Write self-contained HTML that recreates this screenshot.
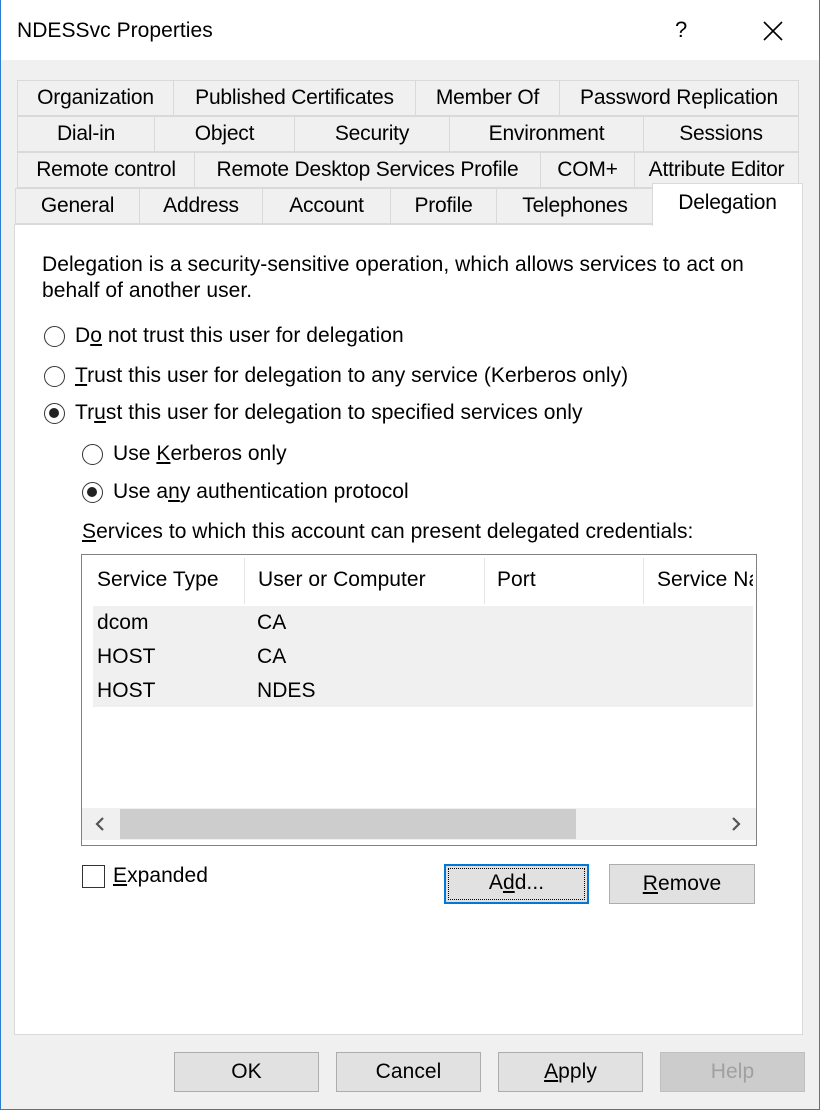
<!DOCTYPE html>
<html><head><style>
*{box-sizing:border-box;margin:0;padding:0}
body{width:820px;height:1110px;background:#f0f0f0;font-family:"Liberation Sans",sans-serif;font-size:21px;letter-spacing:0.05px;color:#000;position:relative;overflow:hidden}
.win{position:absolute;left:0;top:0;width:820px;height:1110px;border:1px solid #2b7fd0;border-top:none}
.title{position:absolute;left:1px;top:0;width:818px;height:60px;background:#fff}
.a{position:absolute;white-space:nowrap}
.tab{position:absolute;height:36px;border:1px solid #d9d9d9;background:#f0f0f0;text-align:center;line-height:34px;white-space:nowrap;letter-spacing:-0.2px}
.panel{position:absolute;left:14px;top:224px;width:789px;height:811px;background:#fff;border:1px solid #d9d9d9}
.rad{position:absolute;width:21px;height:21px;border:1.5px solid #333;border-radius:50%;background:#fff}
.rad.on::after{content:"";position:absolute;left:4px;top:4px;width:10px;height:10px;border-radius:50%;background:#222}
.btn{position:absolute;height:40px;background:#e1e1e1;border:1px solid #adadad;text-align:center;line-height:38px}
u{text-decoration:underline}
</style></head><body>
<div class="win"></div>
<div class="title"></div>
<div class="a" style="left:17px;top:19px;font-size:21px">NDESSvc Properties</div>
<div class="a" style="left:675px;top:17px;font-size:22px">?</div>
<svg class="a" style="left:762px;top:20px" width="22" height="22"><path d="M2 2L20 20M20 2L2 20" stroke="#000" stroke-width="1.6"/></svg>

<div class="tab" style="left:17px;top:80px;width:157px">Organization</div>
<div class="tab" style="left:173px;top:80px;width:243px">Published Certificates</div>
<div class="tab" style="left:415px;top:80px;width:145px">Member Of</div>
<div class="tab" style="left:559px;top:80px;width:240px">Password Replication</div>

<div class="tab" style="left:17px;top:116px;width:138px">Dial-in</div>
<div class="tab" style="left:154px;top:116px;width:141px">Object</div>
<div class="tab" style="left:294px;top:116px;width:156px">Security</div>
<div class="tab" style="left:449px;top:116px;width:195px">Environment</div>
<div class="tab" style="left:643px;top:116px;width:156px">Sessions</div>

<div class="tab" style="left:17px;top:152px;width:178px">Remote control</div>
<div class="tab" style="left:194px;top:152px;width:347px">Remote Desktop Services Profile</div>
<div class="tab" style="left:540px;top:152px;width:95px">COM+</div>
<div class="tab" style="left:634px;top:152px;width:165px">Attribute Editor</div>

<div class="tab" style="left:15px;top:188px;width:125px">General</div>
<div class="tab" style="left:139px;top:188px;width:124px">Address</div>
<div class="tab" style="left:262px;top:188px;width:129px">Account</div>
<div class="tab" style="left:390px;top:188px;width:107px">Profile</div>
<div class="tab" style="left:496px;top:188px;width:158px">Telephones</div>

<div class="panel"></div>
<div class="tab" style="left:652px;top:183px;width:151px;height:43px;background:#fff;border-bottom:none;line-height:38px">Delegation</div>

<div class="a" style="left:42px;top:252px;line-height:26px">Delegation is a security-sensitive operation, which allows services to act on<br>behalf of another user.</div>

<div class="rad" style="left:44px;top:326px"></div>
<div class="a" style="left:75px;top:324px">D<u>o</u> not trust this user for delegation</div>
<div class="rad" style="left:44px;top:366px"></div>
<div class="a" style="left:75px;top:364px"><u>T</u>rust this user for delegation to any service (Kerberos only)</div>
<div class="rad on" style="left:44px;top:403px"></div>
<div class="a" style="left:75px;top:401px">Tr<u>u</u>st this user for delegation to specified services only</div>
<div class="rad" style="left:82px;top:444px"></div>
<div class="a" style="left:113px;top:442px">Use <u>K</u>erberos only</div>
<div class="rad on" style="left:82px;top:482px"></div>
<div class="a" style="left:113px;top:480px">Use a<u>n</u>y authentication protocol</div>

<div class="a" style="left:82px;top:520px"><u>S</u>ervices to which this account can present delegated credentials:</div>

<div class="a" style="left:81px;top:554px;width:676px;height:292px;border:1px solid #828282;background:#fff"></div>
<div class="a" style="left:244px;top:558px;width:1px;height:46px;background:#e5e5e5"></div>
<div class="a" style="left:484px;top:558px;width:1px;height:46px;background:#e5e5e5"></div>
<div class="a" style="left:643px;top:558px;width:1px;height:46px;background:#e5e5e5"></div>
<div class="a" style="left:97px;top:568px">Service Type</div>
<div class="a" style="left:258px;top:568px">User or Computer</div>
<div class="a" style="left:497px;top:568px">Port</div>
<div class="a" style="left:657px;top:568px;width:96px;overflow:hidden">Service Name</div>
<div class="a" style="left:93px;top:606px;width:660px;height:101px;background:#f0f0f0"></div>
<div class="a" style="left:97px;top:606px;line-height:34px">dcom<br>HOST<br>HOST</div>
<div class="a" style="left:257px;top:606px;line-height:34px">CA<br>CA<br>NDES</div>
<div class="a" style="left:82px;top:808px;width:674px;height:32px;background:#f0f0f0"></div>
<div class="a" style="left:120px;top:809px;width:456px;height:30px;background:#cdcdcd"></div>
<svg class="a" style="left:94px;top:816px" width="12" height="16"><path d="M9 2L3 8L9 14" stroke="#555" stroke-width="2.2" fill="none"/></svg>
<svg class="a" style="left:730px;top:816px" width="12" height="16"><path d="M3 2L9 8L3 14" stroke="#555" stroke-width="2.2" fill="none"/></svg>

<div class="a" style="left:82px;top:865px;width:23px;height:23px;border:1.5px solid #333;background:#fff"></div>
<div class="a" style="left:113px;top:864px"><u>E</u>xpanded</div>

<div class="btn" style="left:444px;top:864px;width:145px;border:2px solid #0078d7;line-height:34px"><div style="position:absolute;left:2px;top:2px;right:2px;bottom:2px;border:1px dotted #000"></div>A<u>d</u>d...</div>
<div class="btn" style="left:609px;top:864px;width:146px"><u>R</u>emove</div>

<div class="btn" style="left:174px;top:1052px;width:145px">OK</div>
<div class="btn" style="left:336px;top:1052px;width:145px">Cancel</div>
<div class="btn" style="left:498px;top:1052px;width:145px"><u>A</u>pply</div>
<div class="btn" style="left:660px;top:1052px;width:145px;background:#cccccc;border-color:#bfbfbf;color:#a0a0a0">Help</div>
</body></html>
